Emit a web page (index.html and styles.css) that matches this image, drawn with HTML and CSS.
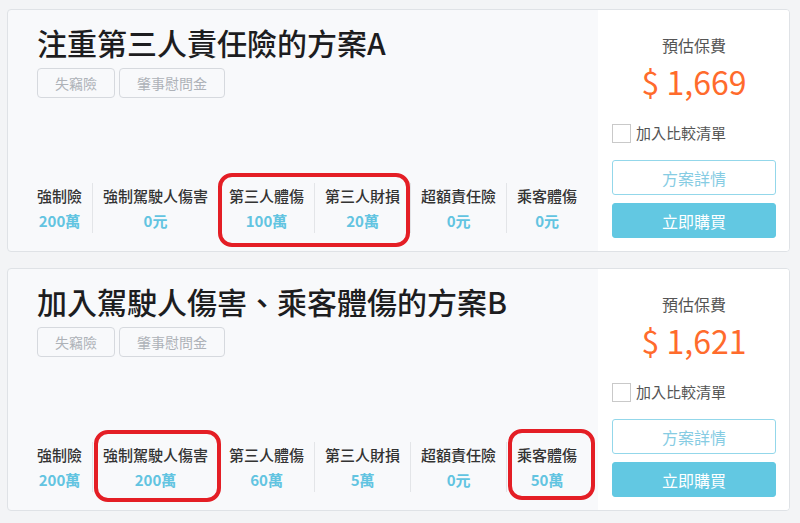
FILE: index.html
```html
<!DOCTYPE html>
<html lang="zh-Hant">
<head>
  <meta charset="UTF-8" />
  <meta name="viewport" content="width=device-width, initial-scale=1.0"/>
  <title>方案比較</title>
  <link rel="stylesheet" href="styles.css">
</head>
<body>

<div class="plan">
  <div class="plan-main">
    <h2 class="plan-title">注重第三人責任險的方案A</h2>
    <div class="tags">
      <span class="tag">失竊險</span>
      <span class="tag">肇事慰問金</span>
    </div>
    <div class="coverage">
      <div class="cov">
        <div class="cov-name">強制險</div>
        <div class="cov-amount">200萬</div>
      </div>
      <div class="cov">
        <div class="cov-name">強制駕駛人傷害</div>
        <div class="cov-amount">0元</div>
      </div>
      <div class="cov-group mark mark-a">
        <div class="cov">
          <div class="cov-name">第三人體傷</div>
          <div class="cov-amount">100萬</div>
        </div>
        <div class="cov">
          <div class="cov-name">第三人財損</div>
          <div class="cov-amount">20萬</div>
        </div>
      </div>
      <div class="cov">
        <div class="cov-name">超額責任險</div>
        <div class="cov-amount">0元</div>
      </div>
      <div class="cov">
        <div class="cov-name">乘客體傷</div>
        <div class="cov-amount">0元</div>
      </div>
    </div>
  </div>
  <div class="plan-side">
    <div class="fee-label">預估保費</div>
    <div class="fee">$ 1,669</div>
    <label class="compare"><span class="box"></span>加入比較清單</label>
    <button class="btn btn-outline">方案詳情</button>
    <button class="btn btn-fill">立即購買</button>
  </div>
</div>

<div class="plan">
  <div class="plan-main">
    <h2 class="plan-title">加入駕駛人傷害、乘客體傷的方案B</h2>
    <div class="tags">
      <span class="tag">失竊險</span>
      <span class="tag">肇事慰問金</span>
    </div>
    <div class="coverage">
      <div class="cov">
        <div class="cov-name">強制險</div>
        <div class="cov-amount">200萬</div>
      </div>
      <div class="cov mark mark-b">
        <div class="cov-name">強制駕駛人傷害</div>
        <div class="cov-amount">200萬</div>
      </div>
      <div class="cov">
        <div class="cov-name">第三人體傷</div>
        <div class="cov-amount">60萬</div>
      </div>
      <div class="cov">
        <div class="cov-name">第三人財損</div>
        <div class="cov-amount">5萬</div>
      </div>
      <div class="cov">
        <div class="cov-name">超額責任險</div>
        <div class="cov-amount">0元</div>
      </div>
      <div class="cov mark mark-c">
        <div class="cov-name">乘客體傷</div>
        <div class="cov-amount">50萬</div>
      </div>
    </div>
  </div>
  <div class="plan-side">
    <div class="fee-label">預估保費</div>
    <div class="fee">$ 1,621</div>
    <label class="compare"><span class="box"></span>加入比較清單</label>
    <button class="btn btn-outline">方案詳情</button>
    <button class="btn btn-fill">立即購買</button>
  </div>
</div>

</body>
</html>
```

FILE: styles.css
```css
body {
  margin: 0;
  padding: 9px 10px 10px 7px;
  background: #f3f4f6;
  font-family: "Noto Sans CJK TC", "Noto Sans", sans-serif;
}
.plan {
  display: flex;
  border: 1px solid #dfe2e6;
  border-radius: 4px;
  background: #f8f9fb;
  overflow: hidden;
}
.plan + .plan {
  margin-top: 16px;
}
.plan-main {
  flex: 1;
  display: flex;
  flex-direction: column;
  padding: 12px 10px 18px 29px;
}
.plan-title {
  margin: 0;
  font-size: 30px;
  font-weight: 500;
  line-height: 40px;
  color: #1d1d1f;
}
.tags {
  display: flex;
  gap: 4px;
  margin-top: 6px;
}
.tag {
  border: 1px solid #d6d9de;
  border-radius: 4px;
  padding: 0 17px;
  font-size: 14px;
  line-height: 28px;
  color: #aeb2b8;
}
.coverage {
  margin-top: auto;
  display: flex;
}
.cov-group {
  display: flex;
}
.cov {
  padding: 0 10px;
  border-left: 1px solid #e3e5e8;
  text-align: center;
}
.coverage > .cov:first-child {
  border-left: 0;
  padding-left: 0;
}
.cov-name {
  font-size: 15px;
  line-height: 25px;
  font-weight: 500;
  color: #333;
}
.cov-amount {
  font-size: 15px;
  line-height: 25px;
  font-weight: 700;
  color: #62c4e1;
}

/* red hand-drawn highlight boxes */
.mark {
  position: relative;
}
.mark::after {
  content: "";
  position: absolute;
  border: 4px solid #e41e25;
  border-radius: 14px;
}
.mark-a::after {
  top: -10px;
  bottom: -14px;
  left: 0;
  right: 0;
}
.mark-b::after {
  top: -12px;
  bottom: -10px;
  left: 1px;
  right: -3px;
}
.mark-c::after {
  top: -13px;
  bottom: -8px;
  left: 1px;
  right: -8px;
}

.plan-side {
  width: 191px;
  flex: none;
  box-sizing: border-box;
  background: #fff;
  padding: 23px 13px 13px 14px;
  text-align: center;
}
.fee-label {
  font-size: 16px;
  line-height: 24px;
  color: #555;
}
.fee {
  margin-top: 4px;
  font-size: 32px;
  line-height: 40px;
  color: #ff6b2c;
}
.compare {
  margin-top: 20px;
  display: flex;
  align-items: center;
  gap: 5px;
  font-size: 15px;
  line-height: 24px;
  color: #555;
}
.box {
  width: 17px;
  height: 17px;
  border: 1px solid #c9c9c9;
  background: #fff;
}
.btn {
  display: block;
  width: 100%;
  height: 35px;
  border-radius: 3px;
  font-family: inherit;
  font-size: 16px;
  cursor: pointer;
}
.btn-outline {
  margin-top: 15px;
  border: 1px solid #93d7ea;
  background: #fff;
  color: #86cce3;
}
.btn-fill {
  margin-top: 8px;
  border: 1px solid #62c8e2;
  background: #62c8e2;
  color: #fff;
}
```
